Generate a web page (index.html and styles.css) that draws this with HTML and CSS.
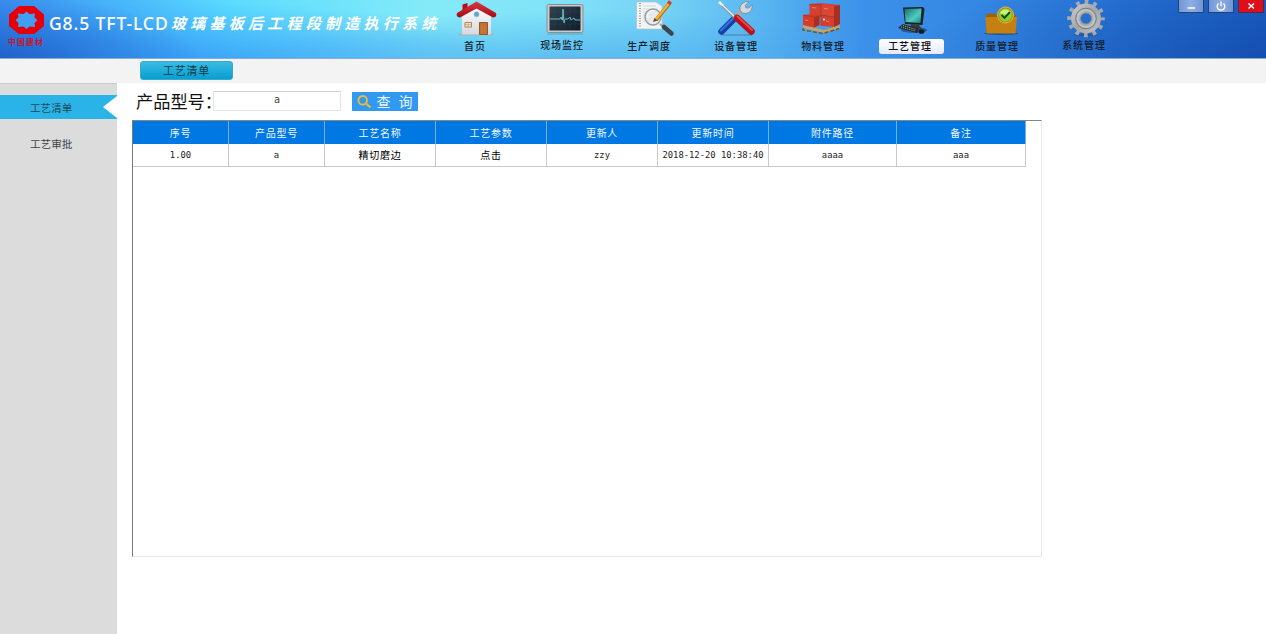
FILE: index.html
```html
<!DOCTYPE html>
<html lang="zh-CN">
<head>
<meta charset="utf-8">
<title>工艺清单</title>
<link rel="stylesheet" href="styles.css">
</head>
<body>
<header class="topbar">
  <div class="brand">
    <div class="logo">
      <svg width="35" height="29" viewBox="0 0 35 29"><path d="M10 0H25L35 8.500V20L25 28H10L0 20V8.500Z" fill="#e50009"/><path d="M17.500 5.500L20.500 8L26 7.500L25.500 11.500L28.500 14.200L25.500 17L26 21L20.500 20.500L17.500 23L14.500 20.500L9 21L9.500 17L6.500 14.200L9.500 11.500L9 7.500L14.500 8Z" fill="#3f9ff5"/></svg>
      <span class="logo-name">中国建材</span>
    </div>
    <h1 class="title"><span class="title-latin">G8.5 TFT-LCD</span><span class="title-cn">玻璃基板后工程段制造执行系统</span></h1>
  </div>
  <nav class="nav">
    <a class="nav-item"><svg class="nav-icon" viewBox="432 0 87 38">
      <defs><linearGradient id="wall" x2="0" y2="1"><stop stop-color="#fff"/><stop offset="1" stop-color="#d7d9df"/></linearGradient>
      <linearGradient id="roof" x2="0" y2="1"><stop stop-color="#d93a40"/><stop offset="1" stop-color="#a80714"/></linearGradient></defs>
      <path d="M459 33.500H494L492 35.500H459Z" fill="#a9b2b8"/><path d="M462 16L476.500 5L491 16V34.500H462Z" fill="url(#wall)"/>
      <path d="M462.500 11V4.500L467.500 3V9Z" fill="#b90c18"/>
      <path d="M457 13L476.500 1.500L496 13Q497.500 17 493 17.500L476.500 8.500L460 17.500Q455.500 17 457 13Z" fill="url(#roof)"/>
      <circle cx="476.500" cy="14.300" r="2.500" fill="#5ca5cf" stroke="#8eb5d0" stroke-width=".7"/>
      <path d="M465 22.500H471.500V27H465Z" fill="#f6edda" stroke="#ad8450"/><path d="M468.300 22V27M465 24.700H472" stroke="#c29a68" stroke-width=".7"/>
      <path d="M479.500 22.500H487.500V34.500H479.500Z" fill="#bf7130" stroke="#874516" stroke-width=".8"/><path d="M482 24.500V33M485 24.500V33" stroke="#d18745" stroke-width=".8"/>
    </svg><span class="nav-label">首页</span></a>
    <a class="nav-item raised"><svg class="nav-icon" viewBox="519 0 87 38">
      <defs><linearGradient id="screen" x2="1" y2="1"><stop stop-color="#34424f"/><stop offset="1" stop-color="#0c1c2b"/></linearGradient></defs>
      <rect x="547" y="4.500" width="36" height="28" rx="1.500" fill="#c9cbcc" stroke="#8a8f92"/><rect x="549.500" y="6.500" width="31" height="24" fill="url(#screen)"/>
      <path d="M555 7V30M560 7V30M565 7V30M570 7V30M575 7V30M550 12H580M550 18H580M550 24H580" stroke="#42616f" stroke-width=".15"/>
      <path d="M550 19H560L561 17L562 20H562.500L563 9L564 23L565 19H568L570 17L571 20L574 18L575 20H580" fill="none" stroke="#6ecad4" stroke-width=".9"/><path d="M547 34H583" stroke="#5d9cb3" stroke-width=".8"/>
    </svg><span class="nav-label">现场监控</span></a>
    <a class="nav-item"><svg class="nav-icon" viewBox="606 0 87 38">
      <path d="M636.500 2H656L662 6V29H636.500Z" fill="#f3f4f5" stroke="#b5c1ca" stroke-width=".7"/><path d="M640 3V28" stroke="#4f5963" stroke-dasharray="1 1.500"/>
      <path d="M643 6H656M643 9H658M643 12H658M643 15H658M643 18H658M643 21H658" stroke="#c8ccd0" stroke-width=".7"/>
      <path d="M660 24L664 28" stroke="#9ba0a3" stroke-width="2"/><path d="M664 27L671.500 33.500" stroke="#404548" stroke-width="4.500" stroke-linecap="round"/><circle cx="653" cy="17" r="8" fill="#e5e9ecc0" stroke="#999da0" stroke-width="1.500"/><path d="M648 18A5 5 0 0 1 654 11" fill="none" stroke="#fff"/>
      <path d="M669.500 3.500L656 20" stroke="#ad7010" stroke-width="3.600"/><path d="M669 3.500L655.800 19.500" stroke="#f4b12b" stroke-width="2.400"/><path d="M654.500 18L653 22L657.500 20.500Z" fill="#61492d"/><path d="M668.500 4L670.500 1.500" stroke="#db3630" stroke-width="3.800"/>
    </svg><span class="nav-label">生产调度</span></a>
    <a class="nav-item"><svg class="nav-icon" viewBox="693 0 87 38">
      <path d="M721 35H752" stroke="#507b9b"/><path d="M721.500 31.500L735 18" stroke="#173fac" stroke-width="6.500" stroke-linecap="round"/><path d="M721 30.500L734 17.500" stroke="#3673df" stroke-width="2" stroke-linecap="round"/>
      <path d="M736 16L743 9" stroke="#a6abb1" stroke-width="4"/><path d="M740 10Q739 4 746 1.500L749 2L745 5.500L746 8L749 8L752 4.500Q753 12 746 13.500L742 13Z" fill="#d5d8db" stroke="#75808a" stroke-width=".7"/>
      <path d="M720 3L735 18" stroke="#89939c" stroke-width="2.600"/><path d="M719 2L735 17" stroke="#f1f1f1" stroke-width="1.300"/><path d="M718 3L720 1L724 5L722 6Z" fill="#eee"/>
      <path d="M737 18L751.500 31.500" stroke="#b5121c" stroke-width="6.500" stroke-linecap="round"/><path d="M737.500 16.500L752 30" stroke="#ec4548" stroke-width="2" stroke-linecap="round"/>
    </svg><span class="nav-label">设备管理</span></a>
    <a class="nav-item"><svg class="nav-icon" viewBox="780 0 87 38">
      <path d="M803 25L824 30L840 25V28L824 33L803 28Z" fill="#c6a366"/><path d="M803 28V30L823 33.500L839 28.500" fill="none" stroke="#76552b" stroke-width="1.500" stroke-dasharray="4 2"/>
      <path d="M809.500 4L821 3L840 5V17H809.500Z" fill="#d5412f"/><path d="M821 5L834 6V17H821Z" fill="#da4733"/><path d="M834 6L840 5V24L834 27Z" fill="#a92f20"/>
      <path d="M821 15L834 17V27L821 26Z" fill="#d5402e"/><path d="M803 15L813 14L819.500 15.500V25L814 27.500L803 25Z" fill="#d93b28"/><path d="M814 17L819.500 15.500V25L814 27.500Z" fill="#a92f20"/>
      <path d="M803 15L814 17M821 5V26M821 15L834 17L840 15M809.500 4.500L821 5" fill="none" stroke="#99352a" stroke-width=".7"/><path d="M812 7.500L816 8M824 8.500L828 9M805 20L808 20.500M826 21L829 21.500" stroke="#f39a8d" stroke-width=".7"/><circle cx="824" cy="19.500" r="1" fill="#fff"/>
    </svg><span class="nav-label">物料管理</span></a>
    <a class="nav-item active"><svg class="nav-icon" viewBox="867 0 87 38">
      <defs><linearGradient id="crt" x2="1" y2="1"><stop stop-color="#166c72"/><stop offset=".6" stop-color="#50ccc0"/><stop offset="1" stop-color="#168084"/></linearGradient></defs>
      <ellipse cx="914" cy="30" rx="13" ry="3" fill="#174c82" opacity=".7"/><path d="M903 7.500L923 7L924.500 9L922.500 25L905 24Z" fill="#182324"/><path d="M904.500 9L921.500 8.500L920.500 23L905.500 22Z" fill="url(#crt)"/>
      <path d="M911 24L919 25L922 29L910 28Z" fill="#353d3d"/><path d="M903 24L919 28.500L917 33L898 28Z" fill="#252a2b"/><path d="M901 27L915 31M903 25.500L916 29.500" stroke="#a9afb0" stroke-dasharray="1 1"/><ellipse cx="921.500" cy="31.500" rx="3" ry="2.300" fill="#151b20"/>
    </svg><span class="nav-label">工艺管理</span></a>
    <a class="nav-item"><svg class="nav-icon" viewBox="954 0 87 38">
      <ellipse cx="1001" cy="33.500" rx="17" ry="1.500" fill="#1e508e"/><path d="M986 16L987 13.500H995L996 15H1016V33H986Z" fill="#9b6308"/><path d="M985.500 17H1017L1015.500 33.500H986.500Z" fill="#c58011"/>
      <circle cx="1005.500" cy="15" r="8" fill="#bd861c" stroke="#dfb54f"/><circle cx="1005.500" cy="15" r="6.500" fill="#80d622"/><path d="M1000 13A6 6 0 0 1 1011 13Q1006 16 1000 13" fill="#c3f779"/><path d="M1001.500 15L1004.500 18L1010 12" fill="none" stroke="#23410e" stroke-width="1.900"/>
    </svg><span class="nav-label">质量管理</span></a>
    <a class="nav-item raised"><svg class="nav-icon" viewBox="1041 0 87 38">
      <defs><linearGradient id="metal" x2="1" y2="1"><stop stop-color="#bfc1c3"/><stop offset=".5" stop-color="#a4a6a8"/><stop offset="1" stop-color="#b6b8ba"/></linearGradient></defs>
      <ellipse cx="1086" cy="35" rx="12" ry="1.300" fill="#275996"/>
      <circle cx="1086" cy="18.500" r="16.500" fill="none" stroke="#a6a9ab" stroke-width="4.500" stroke-dasharray="3.700 4.940" stroke-dashoffset="1.850"/><circle cx="1086" cy="18.500" r="10.200" fill="none" stroke="url(#metal)" stroke-width="9.500"/>
      <circle cx="1086" cy="18.500" r="10.300" fill="none" stroke="#777b7e" stroke-width="1"/><circle cx="1086" cy="18.500" r="8.500" fill="none" stroke="#c4c7c9" stroke-width="1.500"/><circle cx="1086" cy="18.500" r="5.500" fill="none" stroke="#858b90" stroke-width=".8"/>
    </svg><span class="nav-label">系统管理</span></a>
  </nav>
  <div class="window-controls">
    <button class="win-btn"><svg width="24" height="12" viewBox="0 0 24 12"><path d="M8.500 8H16" stroke="#fff" stroke-width="1.500"/></svg></button>
    <button class="win-btn"><svg width="24" height="12" viewBox="0 0 24 12"><path d="M12 1.500V6M9.500 3.500A3.800 3.800 0 1 0 14.500 3.500" fill="none" stroke="#fff" stroke-width="1.300"/></svg></button>
    <button class="win-btn close"><svg width="24" height="12" viewBox="0 0 24 12"><path d="M9.500 3.500L15 8.500M15 3.500L9.500 8.500" stroke="#fff" stroke-width="1.500"/></svg></button>
  </div>
</header>
<div class="tabs"><button class="tab">工艺清单</button></div>
<div class="layout">
  <aside class="sidebar">
    <a class="side-item selected"><span>工艺清单</span><i class="pointer"></i></a>
    <a class="side-item"><span>工艺审批</span></a>
  </aside>
  <main class="content">
    <form class="search">
      <label class="search-label">产品型号：</label>
      <div class="search-input">a</div>
      <button type="button" class="search-btn"><svg width="15" height="14" viewBox="0 0 15 14"><circle cx="5.700" cy="5.300" r="4.300" fill="none" stroke="#e8bd32" stroke-width="1.900"/><path d="M9 8.500L13.500 12.500" stroke="#e8bd32" stroke-width="2.200"/></svg><span>查</span><span>询</span></button>
    </form>
    <div class="grid-frame">
      <table class="grid">
        <colgroup><col class="c96"><col class="c96"><col class="c111"><col class="c111"><col class="c111"><col class="c111"><col class="c128"><col class="c129"></colgroup>
        <thead><tr><th>序号</th><th>产品型号</th><th>工艺名称</th><th>工艺参数</th><th>更新人</th><th>更新时间</th><th>附件路径</th><th>备注</th></tr></thead>
        <tbody><tr><td>1.00</td><td>a</td><td class="cn">精切磨边</td><td class="cn">点击</td><td>zzy</td><td>2018-12-20 10:38:40</td><td>aaaa</td><td>aaa</td></tr></tbody>
      </table>
    </div>
  </main>
</div>
</body>
</html>
```

FILE: styles.css
```css
* { box-sizing: border-box; }
body { margin: 0; height: 634px; overflow: hidden; background: #fff; color: #222; font-family: "Liberation Sans", "Noto Sans CJK SC", sans-serif; display: flex; flex-direction: column; }
button { font-family: inherit; margin: 0; padding: 0; }
svg { display: block; }

.topbar {
  height: 59px; flex: none; display: flex; border-bottom: 1px solid #8aaed0;
  background:
    radial-gradient(ellipse 200px 62px at 0 100%, rgba(24,82,190,.75), rgba(24,82,190,0)),
    radial-gradient(ellipse 330px 62px at 190px 110%, rgba(45,140,245,.75), rgba(60,160,250,0)),
    radial-gradient(ellipse 340px 56px at 570px 115%, rgba(55,155,235,.6), rgba(60,160,250,0)),
    radial-gradient(ellipse 360px 90px at 100% 100%, rgba(15,65,160,.55), rgba(20,80,180,0)),
    linear-gradient(90deg, #3b8ef0 0, #48b6fa 120px, #5bdcff 230px, #84eaf8 430px, #82e3f8 550px, #76d3f5 660px, #5ab6f0 760px, #3c91e9 860px, #3487e3 980px, #2876d7 1110px, #1c5fc5 1266px);
}
.brand { width: 432px; flex: none; display: flex; }
.logo { width: 49px; flex: none; padding: 6px 0 0 9px; }
.logo-name { display: block; margin: 2px 0 0 -1px; font: bold 8px/10px "Noto Sans CJK SC", sans-serif; letter-spacing: 1px; white-space: nowrap; color: #c3152f; }
.title { display: flex; flex: none; margin: 11px 0 0; height: 24px; color: #fff; white-space: nowrap; font-weight: 500; }
.title-latin { width: 122px; font: 500 17.500px/24px "Noto Sans", sans-serif; letter-spacing: .9px; }
.title-cn { font: italic bold 15px/23px "Noto Sans CJK SC", sans-serif; letter-spacing: 4.250px; }
.nav { display: flex; width: 696px; flex: none; }
.nav-item { width: 87px; display: flex; flex-direction: column; align-items: center; }
.nav-icon { width: 87px; height: 38px; flex: none; }
.nav-label { width: 65px; height: 15px; margin-top: 1px; border-radius: 3px; color: #14202c; text-align: center; font: 500 10px/14.500px "Noto Sans CJK SC", sans-serif; letter-spacing: .9px; position: relative; left: -.5px; }
.raised .nav-label { margin-top: 0; }
.active .nav-label { left: 1px; padding-right: 3px; color: #111; background: linear-gradient(#fff, #e6e8fa); }
.window-controls { display: flex; gap: 4px; margin-left: 50px; height: 13px; }
.win-btn { width: 26px; height: 13px; border: 1px solid #24446f; border-top: 0; background: linear-gradient(90deg, #6f98d9, #90ade2 50%, #6f96d6); }
.win-btn.close { background: #de0f1b; border-color: #532b4b; }

.tabs { height: 24px; flex: none; padding: 2px 0 0 140px; background: #f3f3f3; }
.tab { display: block; width: 93px; height: 19px; border: 1px solid #36aacb; border-radius: 3px; background: linear-gradient(#3abbe2, #069ed0); color: #123a49; font: 11px/17px "Noto Sans CJK SC", sans-serif; letter-spacing: .8px; }

.layout { flex: 1; display: flex; min-height: 0; }
.sidebar { width: 117px; padding-top: 11px; background: #dcdcdc; border-top: 1px solid #cbcbcb; }
.side-item { display: flex; justify-content: space-between; align-items: center; height: 24px; padding-left: 30px; color: #444; font: 10.600px/23px "Noto Sans CJK SC", sans-serif; }
.side-item + .side-item { margin-top: 12px; }
.selected { background: #29b3e6; color: #24485a; }
.pointer { border: 11px solid transparent; border-left: 0; border-right: 14px solid #fff; }
.content { flex: 1; padding: 8px 0 0 15px; }

.search { display: flex; height: 29px; }
.search-label { width: 81px; padding-left: 4px; font: 17.200px/19px "Noto Sans CJK SC", sans-serif; white-space: nowrap; color: #111; }
.search-input { width: 128px; height: 20px; border: 1px solid #e2e5ea; border-top: 1px solid #cccfd3; text-align: center; font: 10px/15px "DejaVu Sans", sans-serif; color: #444; }
.search-btn { display: flex; align-items: center; width: 66px; height: 19px; margin: 1px 0 0 10.500px; padding-left: 5px; border: 0; background: #3299f2; color: #e8f4ff; font: 14px/19px "Noto Sans CJK SC", sans-serif; }
.search-btn span { margin-left: 5px; }
.search-btn span + span { margin-left: 8px; }

.grid-frame { width: 910px; height: 437px; border: 1px solid #e8e8e8; border-top: 1px solid #858585; border-left: 1px solid #777; }
.grid { width: 893px; table-layout: fixed; border-collapse: separate; border-spacing: 0; }
.c96 { width: 96px; }
.c111 { width: 111px; }
.c128 { width: 128px; }
.c129 { width: 129px; }
.grid th, .grid td { padding: 0; height: 23px; text-align: center; white-space: nowrap; border-right: 1px solid #c9c9c9; }
.grid th { background: #0078e3; color: #f0f7ff; border-right-color: #78aee0; font: 10px/21px "Noto Sans CJK SC", sans-serif; letter-spacing: .7px; }
.grid td { border-bottom: 1px solid #c9c9c9; color: #222; font: 8.850px/22px "DejaVu Sans Mono", monospace; }
.grid td.cn { font: 10px/22px "Noto Sans CJK SC", sans-serif; letter-spacing: .7px; color: #000; }
```
